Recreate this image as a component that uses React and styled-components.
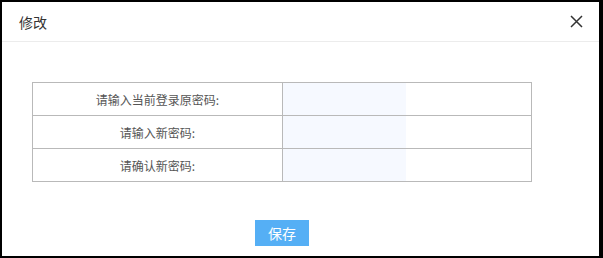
import React from 'react';
import styled, { createGlobalStyle } from 'styled-components';

const GlobalStyle = createGlobalStyle`
    html, body {
        margin: 0;
        padding: 0;
        background: #000;
    }
    * {
        box-sizing: border-box;
    }
`;

const Frame = styled.div`
    width: 603px;
    height: 258px;
    padding: 2px 4px 2px 2px;
    background: #000;
    font-family: "Noto Sans CJK SC", "Noto Sans", sans-serif;
`;

const Dialog = styled.div`
    width: 100%;
    height: 100%;
    background: #fff;
    display: flex;
    flex-direction: column;
`;

const Header = styled.div`
    height: 40px;
    flex-shrink: 0;
    display: flex;
    align-items: center;
    justify-content: space-between;
    padding: 0 16px 0 17px;
    border-bottom: 1px solid #ececec;
`;

const Title = styled.span`
    font-size: 14px;
    color: #333;
    line-height: 1;
`;

const CloseButton = styled.button`
    width: 14px;
    height: 14px;
    padding: 0;
    border: none;
    background: none;
    display: flex;
    align-items: center;
    justify-content: center;
    cursor: pointer;
`;

const Body = styled.div`
    padding: 40px 0 0 30px;
`;

const Content = styled.div`
    width: 500px;
    display: flex;
    flex-direction: column;
    align-items: center;
    gap: 38px;
`;

const Table = styled.table`
    width: 500px;
    border-collapse: collapse;
    table-layout: fixed;
`;

const Row = styled.tr`
    height: 33px;
`;

const LabelCell = styled.td`
    width: 250px;
    border: 1px solid #b9b9b9;
    text-align: center;
    font-size: 12px;
    color: #555;
    padding: 0;
`;

const InputCell = styled.td`
    border: 1px solid #b9b9b9;
    padding: 0;
    height: 33px;
`;

const Input = styled.input`
    display: block;
    width: 123px;
    height: 32px;
    border: none;
    outline: none;
    padding: 0 6px;
    background: #f6f9ff;
    font-size: 12px;
`;

const SaveButton = styled.button`
    width: 54px;
    height: 26px;
    border: none;
    background: #55aff5;
    color: #fff;
    font-family: inherit;
    font-size: 14px;
    padding: 0;
    cursor: pointer;
`;

const fields = [
    '请输入当前登录原密码:',
    '请输入新密码:',
    '请确认新密码:',
];

export default function App() {
    return (
        <>
            <GlobalStyle />
            <Frame>
                <Dialog>
                    <Header>
                        <Title>修改</Title>
                        <CloseButton aria-label="关闭">
                            <svg width="13" height="13" viewBox="0 0 13 13">
                                <path d="M1 1 L12 12 M12 1 L1 12" stroke="#333" strokeWidth="1.5" />
                            </svg>
                        </CloseButton>
                    </Header>
                    <Body>
                        <Content>
                            <Table>
                                <tbody>
                                    {fields.map((label) => (
                                        <Row key={label}>
                                            <LabelCell>{label}</LabelCell>
                                            <InputCell>
                                                <Input type="password" />
                                            </InputCell>
                                        </Row>
                                    ))}
                                </tbody>
                            </Table>
                            <SaveButton>保存</SaveButton>
                        </Content>
                    </Body>
                </Dialog>
            </Frame>
        </>
    );
}
